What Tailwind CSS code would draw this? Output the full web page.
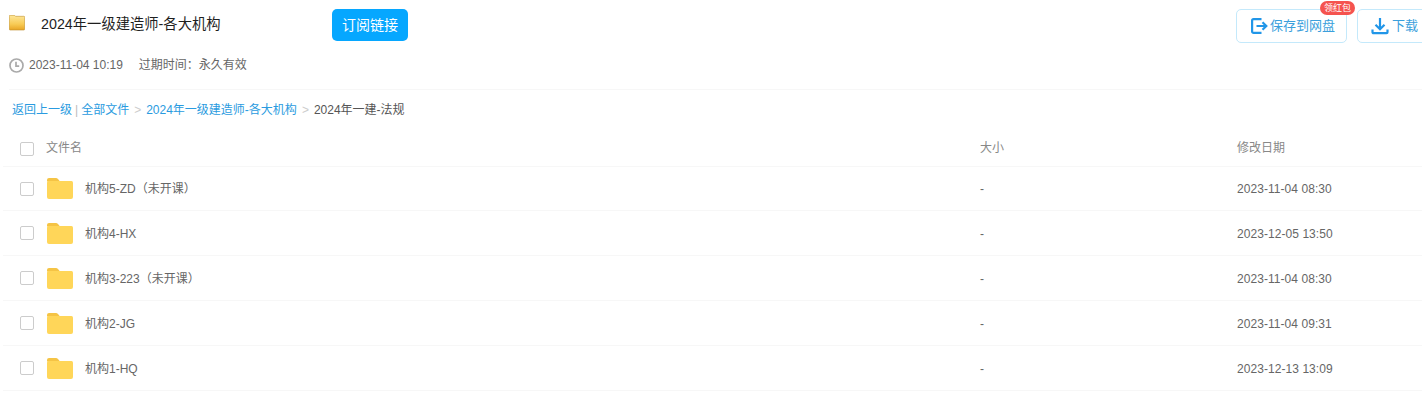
<!DOCTYPE html>
<html lang="zh-CN">
 <head>
  <meta charset="utf-8"/>
  <title>2024年一级建造师-各大机构</title>
  <script src="https://cdn.jsdelivr.net/npm/@tailwindcss/browser@4"></script>
 </head>
 <body class="bg-white overflow-hidden h-[417px] font-['Liberation_Sans','Noto_Sans_CJK_SC',sans-serif]">
  <header class="relative h-[90px] border-b border-[#f7f7f7] ml-[9px]">
   <div class="flex items-start h-[50px]">
    <svg class="w-4 h-[16px] mt-[15px]" viewBox="0 0 16 16">
     <defs><linearGradient id="g" x1="0" y1="0" x2="0" y2="1"><stop offset="0" stop-color="#fde79a"/><stop offset=".6" stop-color="#f8cb55"/><stop offset="1" stop-color="#e8a524"/></linearGradient></defs>
     <path d="M.3 1.200q0-.9.9-.9h4.300l1 1h8.300q.9 0 .9.900v11.900q0 .9-.9.900h-13.600q-.9 0-.9-.9z" fill="url(#g)" stroke="#c08f2c" stroke-width=".6"/>
    </svg>
    <h1 class="ml-4 mt-[13px] text-[14.3px] leading-[22px] text-[#1f1f1f]">2024年一级建造师-各大机构</h1>
    <button class="absolute left-[323px] top-[9px] w-[76px] h-8 rounded-[5px] bg-[#06a7ff] text-white text-sm">订阅链接</button>
   </div>
   <div class="flex items-center mt-[7px] text-xs text-[#666]">
    <svg class="w-[15px] h-[15px] mt-[1px]" viewBox="0 0 15 15" fill="none" stroke="#aaa" stroke-width="1.700"><circle cx="7.500" cy="7.500" r="6.500"/><path d="M7 3.800v4.400h3.200"/></svg>
    <span class="ml-[5px]">2023-11-04 10:19</span>
    <span class="ml-4">过期时间：永久有效</span>
   </div>
   <div class="absolute top-[9px] left-[1227px] flex gap-[10px]">
    <button class="relative flex items-center w-[111px] h-[34px] pl-[13px] rounded-[5px] border border-[#c4e9fb] text-[#3b9fdc] text-[13px]">
     <svg class="w-[18px] h-[18px] mr-[2px]" viewBox="0 0 18 18" fill="none" stroke="#2196e8" stroke-width="2.200"><path d="M11.500 2.100H3.600a1.500 1.500 0 0 0-1.500 1.500v10.800a1.500 1.500 0 0 0 1.500 1.500h7.900"/><path d="M6.500 9h9.500M12.500 5.300l3.800 3.700-3.800 3.700"/></svg>
     保存到网盘
     <span class="absolute -top-[9px] left-[83px] w-[35px] h-[14px] rounded-full bg-[#f5534f] text-white text-[9px] leading-[14px] text-center">领红包</span>
    </button>
    <button class="flex items-center w-[72px] h-[34px] pl-[13px] rounded-[5px] border border-[#c4e9fb] text-[#3b9fdc] text-[13px]">
     <svg class="w-[18px] h-[18px] mr-[3px] shrink-0" viewBox="0 0 18 18" fill="none" stroke="#2196e8" stroke-width="2.200"><path d="M9 1v11M4.500 7.800l4.500 4.500 4.500-4.500"/><path d="M1.500 12.500v2.700a1 1 0 0 0 1 1h13a1 1 0 0 0 1-1v-2.700"/></svg>
     下载
    </button>
   </div>
  </header>

  <nav class="flex items-center h-10 pl-3 text-xs text-[#2a9be0]">
   <a href="#">返回上一级</a>
   <span class="mx-[3px] text-[#bbb]">|</span>
   <a href="#">全部文件</a>
   <span class="mx-[5px] text-[#ccc]">&gt;</span>
   <a href="#">2024年一级建造师-各大机构</a>
   <span class="mx-[5px] text-[#ccc]">&gt;</span>
   <span class="text-[#555]">2024年一建-法规</span>
  </nav>

  <div class="ml-[3px] text-xs text-[#666]">
   <div class="grid grid-cols-[977px_257px_1fr] items-center h-[37px] border-b border-[#f7f7f7] text-[#888]">
    <div class="flex items-center">
     <span class="ml-[17px] mt-[1px] w-[14px] h-[14px] border border-[#ccc] rounded-[2px]"></span>
     <span class="ml-[12px]">文件名</span>
    </div>
    <div>大小</div>
    <div>修改日期</div>
   </div>
   <div class="grid grid-cols-[977px_257px_1fr] items-center h-[44px] border-b border-[#f7f7f7]">
    <div class="flex items-center">
     <span class="ml-[17px] w-[14px] h-[14px] border border-[#ccc] rounded-[2px]"></span>
     <svg class="ml-[13px] w-[26px] h-[21px]" viewBox="0 0 26 21"><path d="M0 2q0-2 2-2h7q1 0 2 1l2 2.500h-13z" fill="#f5c445"/><path d="M0 4.500q0-1.500 1.500-1.500h23q1.500 0 1.500 1.500v14.500q0 2-2 2h-22q-2 0-2-2z" fill="#ffd659"/></svg>
     <span class="ml-[12px]">机构5-ZD（未开课）</span>
    </div>
    <div>-</div>
    <div class="tracking-[0.06px]">2023-11-04 08:30</div>
   </div>
   <div class="grid grid-cols-[977px_257px_1fr] items-center h-[45px] border-b border-[#f7f7f7]">
    <div class="flex items-center">
     <span class="ml-[17px] w-[14px] h-[14px] border border-[#ccc] rounded-[2px]"></span>
     <svg class="ml-[13px] w-[26px] h-[21px]" viewBox="0 0 26 21"><path d="M0 2q0-2 2-2h7q1 0 2 1l2 2.500h-13z" fill="#f5c445"/><path d="M0 4.500q0-1.500 1.500-1.500h23q1.500 0 1.500 1.500v14.500q0 2-2 2h-22q-2 0-2-2z" fill="#ffd659"/></svg>
     <span class="ml-[12px] pt-[2px]">机构4-HX</span>
    </div>
    <div class="pt-[2px]">-</div>
    <div class="pt-[2px] tracking-[0.06px]">2023-12-05 13:50</div>
   </div>
   <div class="grid grid-cols-[977px_257px_1fr] items-center h-[45px] border-b border-[#f7f7f7]">
    <div class="flex items-center">
     <span class="ml-[17px] w-[14px] h-[14px] border border-[#ccc] rounded-[2px]"></span>
     <svg class="ml-[13px] w-[26px] h-[21px]" viewBox="0 0 26 21"><path d="M0 2q0-2 2-2h7q1 0 2 1l2 2.500h-13z" fill="#f5c445"/><path d="M0 4.500q0-1.500 1.500-1.500h23q1.500 0 1.500 1.500v14.500q0 2-2 2h-22q-2 0-2-2z" fill="#ffd659"/></svg>
     <span class="ml-[12px] pt-[2px]">机构3-223（未开课）</span>
    </div>
    <div class="pt-[2px]">-</div>
    <div class="pt-[2px] tracking-[0.06px]">2023-11-04 08:30</div>
   </div>
   <div class="grid grid-cols-[977px_257px_1fr] items-center h-[45px] border-b border-[#f7f7f7]">
    <div class="flex items-center">
     <span class="ml-[17px] w-[14px] h-[14px] border border-[#ccc] rounded-[2px]"></span>
     <svg class="ml-[13px] w-[26px] h-[21px]" viewBox="0 0 26 21"><path d="M0 2q0-2 2-2h7q1 0 2 1l2 2.500h-13z" fill="#f5c445"/><path d="M0 4.500q0-1.500 1.500-1.500h23q1.500 0 1.500 1.500v14.500q0 2-2 2h-22q-2 0-2-2z" fill="#ffd659"/></svg>
     <span class="ml-[12px] pt-[2px]">机构2-JG</span>
    </div>
    <div class="pt-[2px]">-</div>
    <div class="pt-[2px] tracking-[0.06px]">2023-11-04 09:31</div>
   </div>
   <div class="grid grid-cols-[977px_257px_1fr] items-center h-[45px] border-b border-[#f7f7f7]">
    <div class="flex items-center">
     <span class="ml-[17px] w-[14px] h-[14px] border border-[#ccc] rounded-[2px]"></span>
     <svg class="ml-[13px] w-[26px] h-[21px]" viewBox="0 0 26 21"><path d="M0 2q0-2 2-2h7q1 0 2 1l2 2.500h-13z" fill="#f5c445"/><path d="M0 4.500q0-1.500 1.500-1.500h23q1.500 0 1.500 1.500v14.500q0 2-2 2h-22q-2 0-2-2z" fill="#ffd659"/></svg>
     <span class="ml-[12px] pt-[2px]">机构1-HQ</span>
    </div>
    <div class="pt-[2px]">-</div>
    <div class="pt-[2px] tracking-[0.06px]">2023-12-13 13:09</div>
   </div>
  </div>
 </body>
</html>
